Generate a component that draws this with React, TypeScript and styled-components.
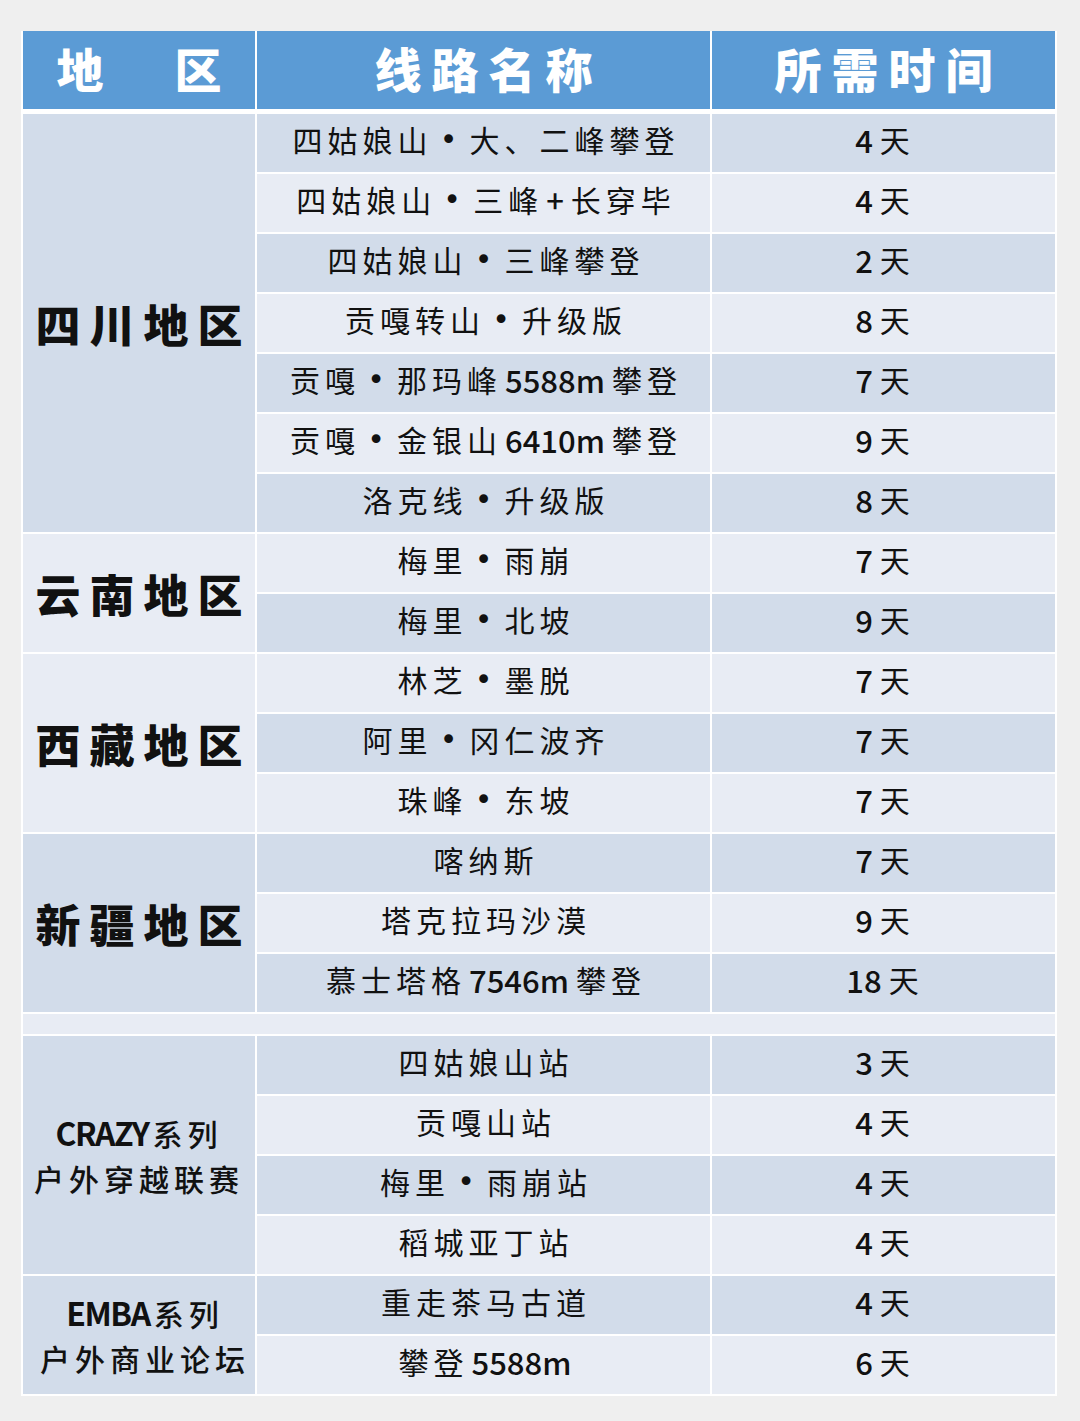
import React from "react";
import styled, { createGlobalStyle } from "styled-components";

const GlobalStyle = createGlobalStyle`
  html, body { margin: 0; padding: 0; background: #efefef; }
  body { font-family: "Noto Sans CJK SC", sans-serif; color: #111; }
`;

const DARK = "#d2dcea";
const LIGHT = "#e8ecf4";
const COLS = "232px 453px 343px";
const CJK = `"Noto Sans CJK SC", sans-serif`;

const Page = styled.div`
  width: 1080px;
  height: 1421px;
  padding: 31px 0 0 21px;
  box-sizing: border-box;
  background: #efefef;
`;

const Table = styled.div`
  width: 1036px;
  box-sizing: border-box;
  background: #ffffff;
  padding: 0 2px 2px;
  display: flex;
  flex-direction: column;
  gap: 5px;
`;

const HeaderRow = styled.div`
  display: grid;
  grid-template-columns: ${COLS};
  column-gap: 2px;
  height: 78px;
`;

const HeaderCell = styled.div<{ $ls: number }>`
  background: #5b9bd5;
  color: #ffffff;
  display: flex;
  align-items: center;
  justify-content: center;
  box-sizing: border-box;
  padding-bottom: 6px;
  font-family: ${CJK};
  font-weight: 900;
  font-size: 47px;
  letter-spacing: ${(p) => p.$ls}px;
  text-indent: ${(p) => p.$ls}px;
  white-space: pre;
`;

const Body = styled.div`
  display: grid;
  grid-template-columns: ${COLS};
  grid-template-rows: repeat(15, 58px) 20px repeat(6, 58px);
  gap: 2px;
`;

const RegionCell = styled.div<{ $span: number; $dark: boolean }>`
  grid-column: 1;
  grid-row: span ${(p) => p.$span};
  background: ${(p) => (p.$dark ? DARK : LIGHT)};
  display: flex;
  flex-direction: column;
  align-items: center;
  justify-content: center;
`;

const RegionBig = styled.div`
  font-family: ${CJK};
  font-weight: 900;
  font-size: 45px;
  letter-spacing: 9px;
  text-indent: 9px;
  line-height: 1;
  color: #111;
`;

const RegionLine = styled.div<{ $shift: number }>`
  font-family: ${CJK};
  font-weight: 500;
  font-size: 30px;
  letter-spacing: 5px;
  line-height: 45px;
  color: #111;
  white-space: nowrap;
  margin-left: ${(p) => p.$shift}px;
`;

const Latin = styled.span`
  font-family: ${CJK};
  font-weight: 700;
  font-size: 32px;
  letter-spacing: -1.5px;
  margin-right: 4px;
`;

const DataCell = styled.div<{ $col: number; $dark: boolean }>`
  grid-column: ${(p) => p.$col};
  background: ${(p) => (p.$dark ? DARK : LIGHT)};
  display: flex;
  align-items: center;
  justify-content: center;
  box-sizing: border-box;
  padding-bottom: 8px;
  font-family: ${CJK};
  font-weight: 400;
  font-size: 30px;
  letter-spacing: 5px;
  text-indent: 5px;
  white-space: nowrap;
  color: #111;
`;

const BlankRow = styled.div`
  grid-column: 1 / -1;
  background: ${LIGHT};
`;

const Num = styled.span`
  font-family: ${CJK};
  font-weight: 500;
  font-size: 31px;
  letter-spacing: 0;
  margin-left: -2px;
  margin-right: 2px;
`;

const Dot = styled.span`
  display: inline-block;
  width: 27px;
  text-align: center;
  font-family: "DejaVu Sans", sans-serif;
  font-size: 30px;
  letter-spacing: 0;
  margin-right: 5px;
`;

const LATIN_RE = /^[0-9A-Za-z+]+$/;

function renderText(text: string) {
  const parts = text.split(/([0-9A-Za-z+]+|・)/).filter((s) => s !== "");
  return parts.map((part, i) => {
    if (part === "・") return <Dot key={i}>•</Dot>;
    if (LATIN_RE.test(part)) return <Num key={i}>{part}</Num>;
    return <React.Fragment key={i}>{part}</React.Fragment>;
  });
}

type Section = {
  region: string | [string, string, string, number];
  dark: boolean;
  rows: [string, string][];
};

const sectionsTop: Section[] = [
  {
    region: "四川地区",
    dark: true,
    rows: [
      ["四姑娘山・大、二峰攀登", "4天"],
      ["四姑娘山・三峰+长穿毕", "4天"],
      ["四姑娘山・三峰攀登", "2天"],
      ["贡嘎转山・升级版", "8天"],
      ["贡嘎・那玛峰5588m攀登", "7天"],
      ["贡嘎・金银山6410m攀登", "9天"],
      ["洛克线・升级版", "8天"],
    ],
  },
  {
    region: "云南地区",
    dark: false,
    rows: [
      ["梅里・雨崩", "7天"],
      ["梅里・北坡", "9天"],
    ],
  },
  {
    region: "西藏地区",
    dark: false,
    rows: [
      ["林芝・墨脱", "7天"],
      ["阿里・冈仁波齐", "7天"],
      ["珠峰・东坡", "7天"],
    ],
  },
  {
    region: "新疆地区",
    dark: true,
    rows: [
      ["喀纳斯", "7天"],
      ["塔克拉玛沙漠", "9天"],
      ["慕士塔格7546m攀登", "18天"],
    ],
  },
];

const sectionsBottom: Section[] = [
  {
    region: ["CRAZY", "系列", "户外穿越联赛", 0],
    dark: true,
    rows: [
      ["四姑娘山站", "3天"],
      ["贡嘎山站", "4天"],
      ["梅里・雨崩站", "4天"],
      ["稻城亚丁站", "4天"],
    ],
  },
  {
    region: ["EMBA", "系列", "户外商业论坛", 12],
    dark: true,
    rows: [
      ["重走茶马古道", "4天"],
      ["攀登5588m", "6天"],
    ],
  },
];

function renderSection(s: Section, startIndex: number) {
  const region =
    typeof s.region === "string" ? (
      <RegionBig>{s.region}</RegionBig>
    ) : (
      <>
        <RegionLine $shift={s.region[3]}>
          <Latin>{s.region[0]}</Latin>
          {s.region[1]}
        </RegionLine>
        <RegionLine $shift={s.region[3]}>{s.region[2]}</RegionLine>
      </>
    );
  const key = typeof s.region === "string" ? s.region : s.region[0];
  return (
    <React.Fragment key={key}>
      <RegionCell $span={s.rows.length} $dark={s.dark}>
        {region}
      </RegionCell>
      {s.rows.map(([name, days], i) => {
        const dark = (startIndex + i) % 2 === 0;
        return (
          <React.Fragment key={name}>
            <DataCell $col={2} $dark={dark}>
              {renderText(name)}
            </DataCell>
            <DataCell $col={3} $dark={dark}>
              {renderText(days)}
            </DataCell>
          </React.Fragment>
        );
      })}
    </React.Fragment>
  );
}

export default function App() {
  let idx = 0;
  const top = sectionsTop.map((s) => {
    const el = renderSection(s, idx);
    idx += s.rows.length;
    return el;
  });
  idx += 1; // blank spacer row
  const bottom = sectionsBottom.map((s) => {
    const el = renderSection(s, idx);
    idx += s.rows.length;
    return el;
  });
  return (
    <Page>
      <GlobalStyle />
      <Table>
        <HeaderRow>
          <HeaderCell $ls={12}>{"地\u3000区"}</HeaderCell>
          <HeaderCell $ls={10}>线路名称</HeaderCell>
          <HeaderCell $ls={10}>所需时间</HeaderCell>
        </HeaderRow>
        <Body>
          {top}
          <BlankRow />
          {bottom}
        </Body>
      </Table>
    </Page>
  );
}
